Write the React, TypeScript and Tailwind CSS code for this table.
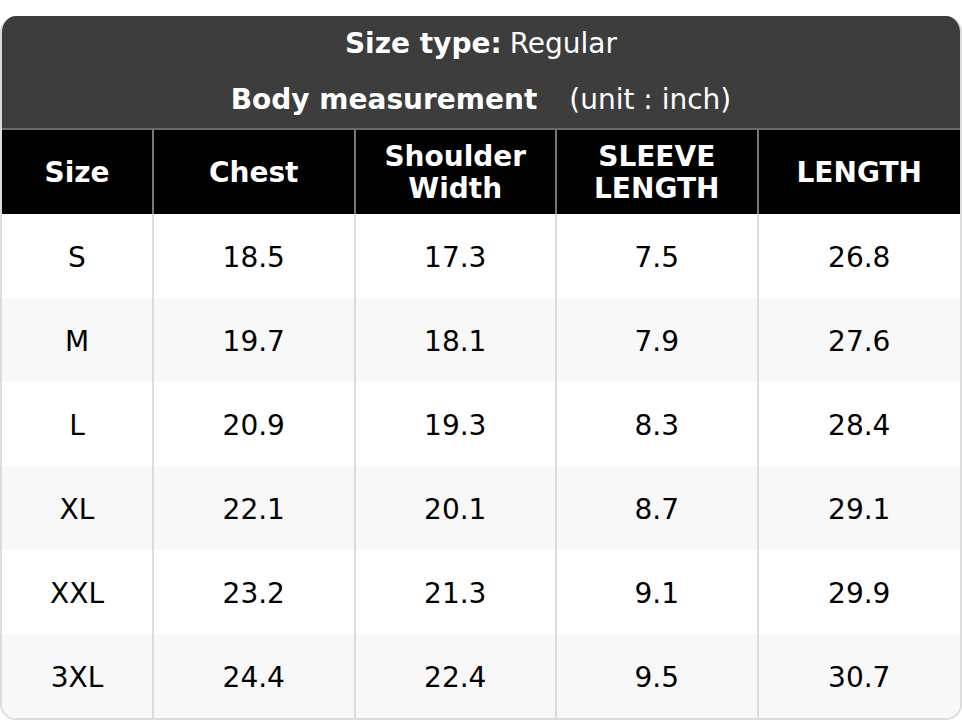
const columns = ["Size", "Chest", "Shoulder Width", "SLEEVE LENGTH", "LENGTH"];

const rows = [
  ["S", "18.5", "17.3", "7.5", "26.8"],
  ["M", "19.7", "18.1", "7.9", "27.6"],
  ["L", "20.9", "19.3", "8.3", "28.4"],
  ["XL", "22.1", "20.1", "8.7", "29.1"],
  ["XXL", "23.2", "21.3", "9.1", "29.9"],
  ["3XL", "24.4", "22.4", "9.5", "30.7"],
];

const grid = "grid grid-cols-[152px_1fr_1fr_1fr_1fr]";

export default function App() {
  return (
    <div className="bg-white pt-4 font-['DejaVu_Sans',sans-serif] text-[28px] leading-[32px]">
      <div className="overflow-hidden rounded-t-2xl rounded-b-2xl border-2 border-t-0 border-[#dcdcdc]">
        <div className="bg-[#3d3d3d] text-white">
          <div className="flex h-14 items-center justify-center">
            <span className="font-bold">Size type:</span>
            <span className="ml-2">Regular</span>
          </div>
          <div className="flex h-14 items-center justify-center">
            <span className="font-bold">Body measurement</span>
            <span className="ml-8">(unit : inch)</span>
          </div>
        </div>
        <div className={`${grid} h-[86px] divide-x-2 divide-[#777] border-t-2 border-[#6a6a6a] bg-black text-white`}>
          {columns.map((c) => (
            <div key={c} className="flex items-center justify-center px-4 pt-0.5 text-center font-bold">
              {c}
            </div>
          ))}
        </div>
        {rows.map((r, i) => (
          <div
            key={r[0]}
            className={`${grid} h-[84px] divide-x-2 divide-[#dcdcdc] text-black ${i % 2 ? "bg-[#f8f8f8]" : "bg-white"}`}
          >
            {r.map((v, j) => (
              <div key={j} className="flex items-center justify-center pt-1">
                {v}
              </div>
            ))}
          </div>
        ))}
      </div>
    </div>
  );
}
